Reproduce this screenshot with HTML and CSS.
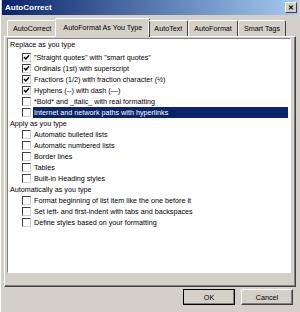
FILE: index.html
```html
<!DOCTYPE html>
<html lang="en">
<head>
    <meta charset="UTF-8">
    <title>AutoCorrect</title>
    <link rel="stylesheet" href="styles.css">
</head>
<body>
    <div class="window">
        <!-- title bar -->
        <div class="titlebar">
            <span class="title">AutoCorrect</span>
            <span class="close">&#x2715;</span>
        </div>

        <!-- tabs -->
        <div class="tabs">
            <div class="tab">AutoCorrect</div>
            <div class="tab active">AutoFormat As You Type</div>
            <div class="tab">AutoText</div>
            <div class="tab">AutoFormat</div>
            <div class="tab">Smart Tags</div>
        </div>

        <div class="panel">
            <div class="list">
                <div class="heading first">Replace as you type</div>
                <div class="row"><span class="box checked"><svg viewBox="0 0 7 7"><polyline points="1,3 2.8,5 6,1.2"/></svg></span>"Straight quotes" with "smart quotes"</div>
                <div class="row"><span class="box checked"><svg viewBox="0 0 7 7"><polyline points="1,3 2.8,5 6,1.2"/></svg></span>Ordinals (1st) with superscript</div>
                <div class="row"><span class="box checked"><svg viewBox="0 0 7 7"><polyline points="1,3 2.8,5 6,1.2"/></svg></span>Fractions (1/2) with fraction character (½)</div>
                <div class="row"><span class="box checked"><svg viewBox="0 0 7 7"><polyline points="1,3 2.8,5 6,1.2"/></svg></span>Hyphens (--) with dash (—)</div>
                <div class="row"><span class="box"></span>*Bold* and _italic_ with real formatting</div>
                <div class="row selected"><span class="box"></span><span class="hl">Internet and network paths with hyperlinks</span></div>

                <div class="heading">Apply as you type</div>
                <div class="row"><span class="box"></span>Automatic bulleted lists</div>
                <div class="row"><span class="box"></span>Automatic numbered lists</div>
                <div class="row"><span class="box"></span>Border lines</div>
                <div class="row"><span class="box"></span>Tables</div>
                <div class="row"><span class="box"></span>Built-in Heading styles</div>

                <div class="heading">Automatically as you type</div>
                <div class="row"><span class="box"></span>Format beginning of list item like the one before it</div>
                <div class="row"><span class="box"></span>Set left- and first-indent with tabs and backspaces</div>
                <div class="row"><span class="box"></span>Define styles based on your formatting</div>
            </div>
        </div>

        <!-- dialog buttons -->
        <div class="actions">
            <button class="btn default">OK</button>
            <button class="btn">Cancel</button>
        </div>
    </div>
</body>
</html>
```

FILE: styles.css
```css
body {
    margin: 0;
    background-color: #d4d0c8;
    font-family: "Liberation Sans", Arial, sans-serif;
    font-size: 7.2px;
    color: black;
}
.window {
    width: 300px;
    height: 312px;
    box-sizing: border-box;
    padding: 0 2px;
    background-color: #d4d0c8;
    box-shadow: inset 1px 0 #ffffff;
    display: flex;
    flex-direction: column;
}
.titlebar {
    height: 15px;
    display: flex;
    align-items: center;
    justify-content: space-between;
    padding: 0 1px 0 3px;
    background: linear-gradient(to right, #0a246a, #a6caf0);
}
.title {
    color: white;
    font-weight: bold;
    font-size: 8px;
}
.close {
    width: 10px;
    height: 9px;
    display: flex;
    align-items: center;
    justify-content: center;
    font-size: 7px;
    font-weight: bold;
    background-color: #d4d0c8;
    border: 1px solid;
    border-color: #ffffff #404040 #404040 #ffffff;
}
.tabs {
    display: flex;
    align-items: flex-end;
    height: 18px;
    margin-top: 3px;
    padding-left: 5px;
    position: relative;
    z-index: 1;
}
.tab {
    height: 15px;
    line-height: 15px;
    padding: 0 5px;
    border: 1px solid;
    border-bottom: none;
    border-color: #ffffff #404040 transparent #ffffff;
    border-radius: 2px 2px 0 0;
}
.tab.active {
    height: 18px;
    line-height: 17px;
    margin: 0 -2px -1px;
    padding: 0 7px;
    background-color: #d4d0c8;
}
.panel {
    flex: none;
    height: 251px;
    margin: 0 2px;
    box-sizing: border-box;
    border: 1px solid;
    border-color: #ffffff #404040 #404040 #ffffff;
    box-shadow: inset -1px -1px #808080;
    padding: 1px 4px 0 2px;
}
.list {
    height: 233px;
    background-color: white;
    border: 1px solid;
    border-color: #808080 #ffffff #ffffff #808080;
    padding: 0 2px 0 0;
}
.heading {
    height: 11px;
    line-height: 11px;
    padding-left: 2px;
}
.heading.first {
    margin-bottom: 2px;
}
.row {
    height: 11px;
    line-height: 11px;
    display: flex;
    align-items: center;
    padding-left: 14px;
}
.box {
    width: 9px;
    height: 9px;
    box-sizing: border-box;
    margin-right: 3px;
    flex: none;
    border: 1px solid;
    border-color: #404040 #d4d0c8 #d4d0c8 #404040;
    background-color: white;
    display: flex;
}
.box svg {
    width: 7px;
    height: 7px;
    fill: none;
    stroke: black;
    stroke-width: 1.4;
}
.row.selected {
    padding-right: 0;
}
.hl {
    flex: 1;
    margin-left: -1px;
    padding-left: 1px;
    background-color: #0a246a;
    color: white;
}
.actions {
    display: flex;
    justify-content: flex-end;
    gap: 6px;
    padding: 2px 5px 0 0;
}
.btn {
    width: 52px;
    height: 16px;
    padding: 0;
    font-family: inherit;
    font-size: 7.2px;
    background-color: #d4d0c8;
    border: 1px solid;
    border-color: #ffffff #404040 #404040 #ffffff;
    box-shadow: inset -1px -1px #808080;
}
.btn.default {
    outline: 1px solid black;
    outline-offset: -1px;
    border-color: #404040;
}
```
